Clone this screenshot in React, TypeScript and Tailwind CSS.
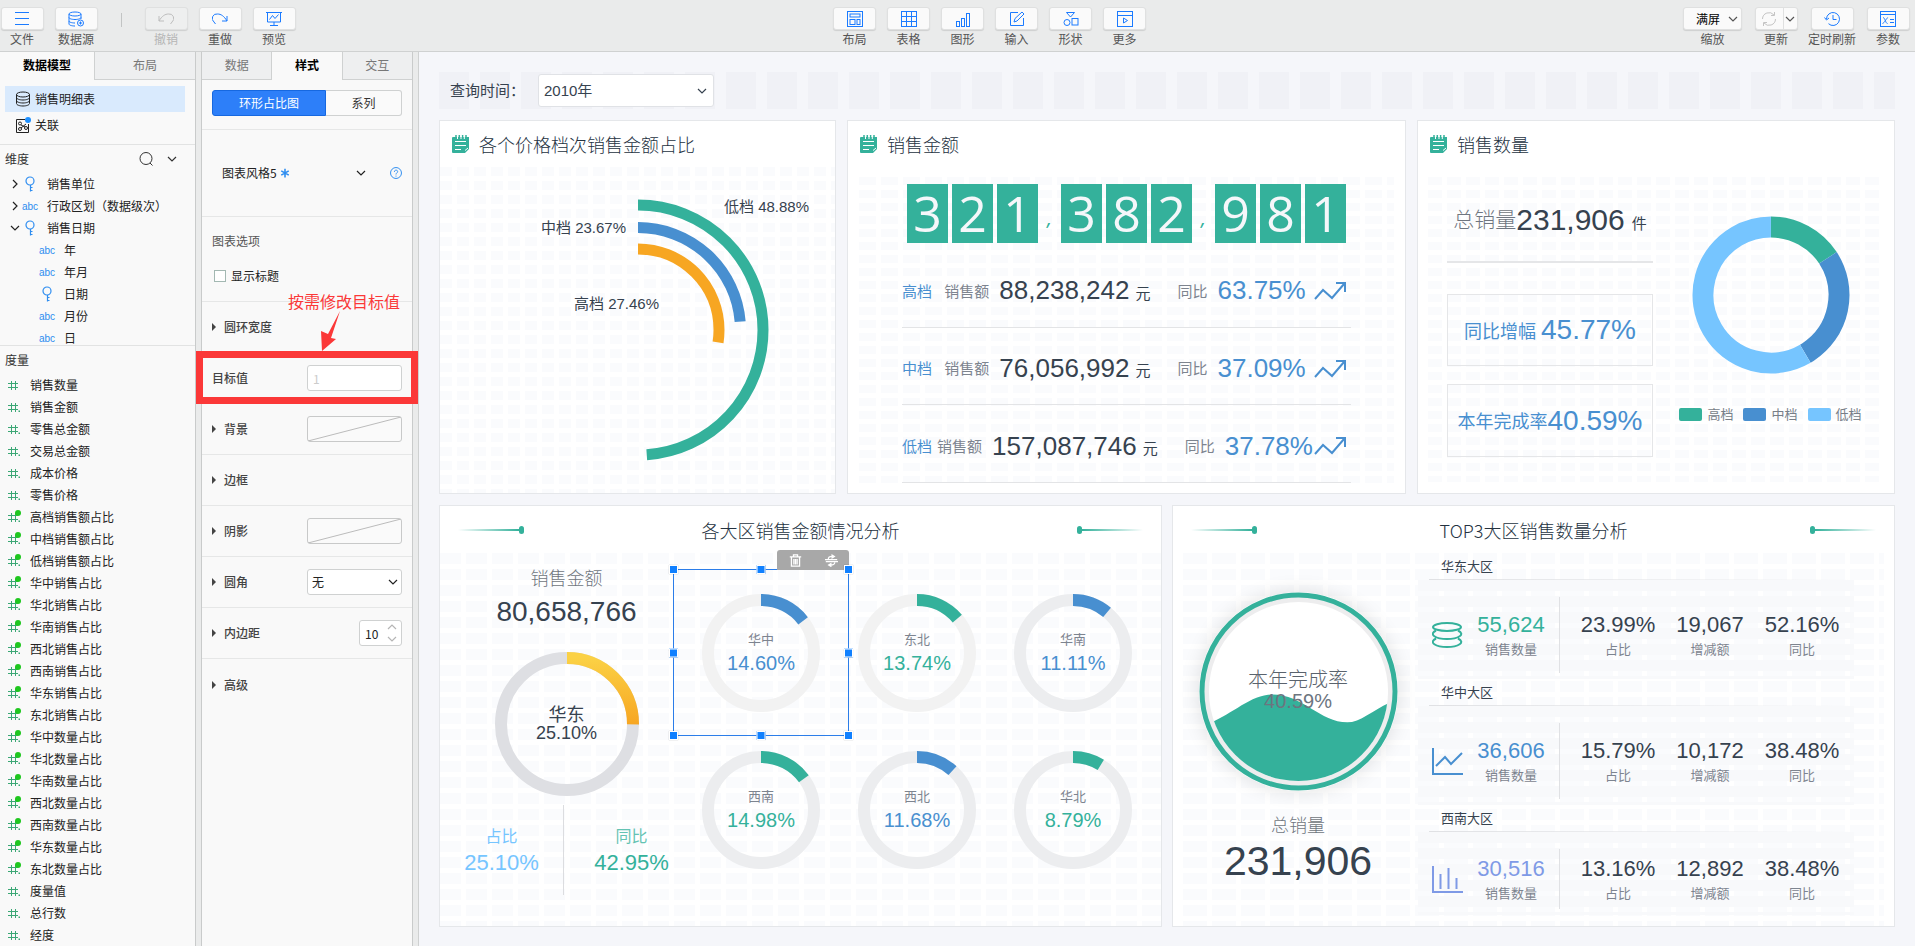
import { ReactNode, useState } from "react";

type IconProps = { children: ReactNode; className?: string; size?: number };

const Icon = ({ children, className = "", size = 16 }: IconProps) => (
  <svg
    width={size}
    height={size}
    viewBox="0 0 16 16"
    fill="none"
    stroke="currentColor"
    strokeWidth="1"
    className={`shrink-0 ${className}`}
    aria-hidden="true"
  >
    {children}
  </svg>
);

const Chevron = ({ className = "" }: { className?: string }) => (
  <svg width="10" height="6" viewBox="0 0 10 6" fill="none" stroke="currentColor" strokeWidth="1.2" className={`shrink-0 ${className}`} aria-hidden="true">
    <path d="M1 1l4 4 4-4" />
  </svg>
);

/* ---------- toolbar ---------- */

const toolIcons = {
  file: <path d="M1 1.500h14M1 7.500h14M1 13.500h14" />,
  source: (
    <>
      <ellipse cx="7" cy="3" rx="6" ry="2" />
      <path d="M1 3v10c0 1.100 2.700 2 6 2M13 3v5M1 6.500c0 1.100 2.700 2 6 2s6-.9 6-2M1 10c0 1.100 2.700 2 6 2" />
      <circle cx="12.500" cy="12" r="3" />
      <path d="M12.500 10.500v3M11 12h3" />
    </>
  ),
  undo: <path d="M1 5v5h5M1 10C4 5 7 3 10.500 3a4.500 4.500 0 0 1 3.500 8l-1.500 2" />,
  redo: <path d="M15 5v5h-5M15 10C12 5 9 3 5.500 3A4.500 4.500 0 0 0 2 11l1.500 2" />,
  preview: (
    <>
      <path d="M0 1.500h16M1.500 1.500v9.500h13V1.500M8 11v3M4 14.500h8" />
      <path d="M3.500 8.500l3-4 2.500 3 3.500-4" />
    </>
  ),
  layout: (
    <>
      <rect x="0.500" y="0.500" width="15" height="15" />
      <rect x="3" y="3" width="10" height="3" />
      <rect x="3" y="8.500" width="5" height="5" />
      <rect x="10" y="8.500" width="3" height="5" />
    </>
  ),
  table: (
    <>
      <rect x="0.500" y="0.500" width="15" height="15" />
      <path d="M0 5.500h16M0 10.500h16M5.500 0v16M10.500 0v16" />
    </>
  ),
  chart: (
    <>
      <rect x="1.500" y="10.500" width="3" height="5" />
      <rect x="6.500" y="7.500" width="3" height="8" />
      <rect x="11.500" y="2.500" width="3" height="13" />
    </>
  ),
  input: (
    <>
      <path d="M9 1.500H1.500v13h13V7" />
      <path d="M5 11l1-3.500L13 1l2 2-7 7z" />
    </>
  ),
  shape: (
    <>
      <path d="M3.500 1.500h8L7.500 6z" />
      <circle cx="4" cy="11.500" r="3" />
      <rect x="9" y="7.500" width="6" height="6.500" />
    </>
  ),
  more: (
    <>
      <rect x="0.500" y="0.500" width="15" height="15" />
      <path d="M0 4.500h16M6.500 7v5l4-2.500z" />
    </>
  ),
  refresh: (
    <>
      <path d="M1.500 8A6.500 6.500 0 0 1 13 4M14.500 8A6.500 6.500 0 0 1 3 12" />
      <path d="M13.500 1v3.500H10M2.500 15v-3.500H6" />
    </>
  ),
  timer: (
    <>
      <path d="M2.500 8a6.500 6.500 0 1 1 2 4.700" />
      <path d="M.5 6.500l2 2.500 2.500-2M9 4v4.500h3.500" />
    </>
  ),
  params: (
    <>
      <rect x="0.500" y="0.500" width="15" height="15" />
      <path d="M0 3.500h16M3 6.500c2 0 2.500 6 4.500 6M8 6.500c-1 0-4 6-5.500 6M10 8.500h4M10 11.500h4" />
    </>
  ),
};

const buttonBox =
  "flex h-[23px] w-[43px] items-center justify-center rounded-[3px] border border-[#dfe0e0] bg-[#fafafa] shadow-[0_1px_1px_rgba(0,0,0,0.12)]";

const Tool = ({ icon, label, disabled = false }: { icon: keyof typeof toolIcons; label: string; disabled?: boolean }) => (
  <button type="button" disabled={disabled} className="group flex w-11 flex-col items-center gap-px whitespace-nowrap text-[#555] disabled:text-[#b5b5b5]">
    <span className={`${buttonBox} text-[#1b7bff] group-disabled:bg-[#eeefef] group-disabled:text-[#bdbdbd]`}>
      <Icon>{toolIcons[icon]}</Icon>
    </span>
    <span className="leading-4">{label}</span>
  </button>
);

const Toolbar = () => (
  <header className="flex h-[52px] shrink-0 border-b border-[#cfd1d1] pt-[7px]">
    <div className="flex flex-1 gap-[10px]">
      <Tool icon="file" label="文件" />
      <Tool icon="source" label="数据源" />
      <div className="flex w-[26px] justify-end pt-[6px]">
        <span className="mr-3 h-[14px] w-px bg-[#c2c4c4]" />
      </div>
      <Tool icon="undo" label="撤销" disabled />
      <Tool icon="redo" label="重做" />
      <Tool icon="preview" label="预览" />
    </div>
    <div className="ml-[69px] flex gap-[10px]">
      <Tool icon="layout" label="布局" />
      <Tool icon="table" label="表格" />
      <Tool icon="chart" label="图形" />
      <Tool icon="input" label="输入" />
      <Tool icon="shape" label="形状" />
      <Tool icon="more" label="更多" />
    </div>
    <div className="flex flex-1 justify-end gap-3 pr-[5px] text-[#555]">
      <div className="flex flex-col items-center gap-px">
        <span className="relative flex items-center">
          <select id="zoom" className="h-[23px] w-[59px] appearance-none rounded-[3px] border border-[#dfe0e0] bg-[#fafafa] pl-3 text-black shadow-[0_1px_1px_rgba(0,0,0,0.12)]">
            <option>满屏</option>
          </select>
          <Chevron className="pointer-events-none absolute right-1" />
        </span>
        <label htmlFor="zoom" className="leading-4">缩放</label>
      </div>
      <div className="flex w-11 flex-col items-center gap-px">
        <span className={buttonBox}>
          <button type="button" disabled aria-label="更新" className="flex flex-1 justify-center text-[#c4c4c4]">
            <Icon>{toolIcons.refresh}</Icon>
          </button>
          <button type="button" aria-label="更新选项" className="flex h-full w-[14px] items-center justify-center border-l border-[#dfe0e0]">
            <Chevron />
          </button>
        </span>
        <span className="leading-4">更新</span>
      </div>
      <Tool icon="timer" label="定时刷新" />
      <Tool icon="params" label="参数" />
    </div>
  </header>
);

/* ---------- data model panel ---------- */

type Dimension = { name: string; type: "key" | "abc"; level: 1 | 2; open?: boolean };

const dimensions: Dimension[] = [
  { name: "销售单位", type: "key", level: 1 },
  { name: "行政区划（数据级次）", type: "abc", level: 1 },
  { name: "销售日期", type: "key", level: 1, open: true },
  { name: "年", type: "abc", level: 2 },
  { name: "年月", type: "abc", level: 2 },
  { name: "日期", type: "key", level: 2 },
  { name: "月份", type: "abc", level: 2 },
  { name: "日", type: "abc", level: 2 },
];

const measures = [
  { name: "销售数量", kind: "int" },
  { name: "销售金额", kind: "decimal" },
  { name: "零售总金额", kind: "decimal" },
  { name: "交易总金额", kind: "decimal" },
  { name: "成本价格", kind: "decimal" },
  { name: "零售价格", kind: "decimal" },
  { name: "高档销售额占比", kind: "calc" },
  { name: "中档销售额占比", kind: "calc" },
  { name: "低档销售额占比", kind: "calc" },
  { name: "华中销售占比", kind: "calc" },
  { name: "华北销售占比", kind: "calc" },
  { name: "华南销售占比", kind: "calc" },
  { name: "西北销售占比", kind: "calc" },
  { name: "西南销售占比", kind: "calc" },
  { name: "华东销售占比", kind: "calc" },
  { name: "东北销售占比", kind: "calc" },
  { name: "华中数量占比", kind: "calc" },
  { name: "华北数量占比", kind: "calc" },
  { name: "华南数量占比", kind: "calc" },
  { name: "西北数量占比", kind: "calc" },
  { name: "西南数量占比", kind: "calc" },
  { name: "华东数量占比", kind: "calc" },
  { name: "东北数量占比", kind: "calc" },
  { name: "度量值", kind: "decimal" },
  { name: "总行数", kind: "decimal" },
  { name: "经度", kind: "decimal" },
];

const FieldIcon = ({ type }: { type: "key" | "abc" }) => (
  <span className="flex w-5 justify-center text-[#2e8df0]">
    {type === "abc" ? (
      <span className="font-['Liberation_Sans',sans-serif] text-[10px]">abc</span>
    ) : (
      <Icon>
        <circle cx="8" cy="5" r="4" strokeWidth="1.200" />
        <path d="M8.500 9v6.500M8.500 11.500h2M8.500 14.500h2" strokeWidth="1.200" />
      </Icon>
    )}
  </span>
);

const MeasureIcon = ({ kind }: { kind: string }) => (
  <svg width="16" height="16" viewBox="0 0 16 16" className="shrink-0" aria-hidden="true">
    <path d="M3.500 4v9M7.500 4v9M0 6.500h10M0 10.500h10" stroke="#3ba775" fill="none" />
    {kind !== "int" && <rect x="10.500" y="11.500" width="1.500" height="1.500" fill="#3ba775" />}
    {kind === "calc" && <circle cx="10" cy="4" r="3" fill="#1fc71f" />}
  </svg>
);

const Tab = ({ label, active = false }: { label: string; active?: boolean }) => (
  <button
    type="button"
    className={
      active
        ? "flex-1 bg-[#f9f9f9] pb-[2px] font-bold text-black"
        : "flex-1 border-b border-[#cfd1d1] bg-[#eeeff0] pb-px text-[#777]"
    }
  >
    {label}
  </button>
);

const ModelPanel = () => (
  <aside className="flex w-[196px] shrink-0 flex-col border-r border-[#c9cbcb] bg-[#f9f9f9]">
    <div className="grid h-[28px] shrink-0 grid-cols-[95fr_100fr] divide-x divide-[#cfd1d1]">
      <Tab label="数据模型" active />
      <Tab label="布局" />
    </div>
    <div className="flex shrink-0 flex-col border-b border-[#e2e3e3] px-[5px] py-[6px]">
      <button type="button" className="mr-[5px] flex h-[26px] items-center gap-1 bg-[#d9eafd] pl-[10px]">
        <Icon className="text-[#222]">
          <ellipse cx="8" cy="3.500" rx="6.500" ry="2.500" />
          <path d="M1.500 3.500v9c0 1.400 2.900 2.500 6.500 2.500s6.500-1.100 6.500-2.500v-9M1.500 6.500C1.500 7.900 4.400 9 8 9s6.500-1.100 6.500-2.500M1.500 9.500C1.500 10.900 4.400 12 8 12s6.500-1.100 6.500-2.500" />
        </Icon>
        销售明细表
      </button>
      <button type="button" className="mr-[5px] flex h-[26px] items-center gap-1 pl-[10px]">
        <Icon className="text-[#222]">
          <path d="M10 2.500H1.500v13h12V7" />
          <circle cx="5" cy="6.500" r="1.500" />
          <circle cx="5" cy="12" r="1.500" />
          <circle cx="11" cy="11" r="1.500" />
          <path d="M6 8l4 2M6 11l5-4" />
          <circle cx="13" cy="3" r="3" fill="#1e90ff" stroke="none" />
        </Icon>
        关联
      </button>
    </div>
    <section className="h-[201px] shrink-0 overflow-hidden border-b border-[#e2e3e3]">
      <div className="flex h-7 items-center pl-[5px] pr-[18px] text-[#333]">
        <h2 className="flex-1">维度</h2>
        <button type="button" aria-label="搜索" className="mr-[13px]">
          <Icon>
            <circle cx="8" cy="7.500" r="6" />
            <path d="M12 12l2.500 2.500" />
          </Icon>
        </button>
        <button type="button" aria-label="展开">
          <Chevron />
        </button>
      </div>
      <ul>
        {dimensions.map((d) => (
          <li key={d.name + d.level} className={`flex h-[22px] items-center ${d.level === 2 ? "pl-[37px]" : "pl-[9px]"}`}>
            {d.level === 1 && (
              <span className="flex w-[11px] justify-center">
                <Chevron className={d.open ? "" : "-rotate-90"} />
              </span>
            )}
            <FieldIcon type={d.type} />
            <span className="pl-[7px]">{d.name}</span>
          </li>
        ))}
      </ul>
    </section>
    <section className="overflow-hidden">
      <h2 className="flex h-7 items-center pl-[5px] text-[#333]">度量</h2>
      <ul>
        {measures.map((m) => (
          <li key={m.name} className="flex h-[22px] items-center gap-[6px] pl-2">
            <MeasureIcon kind={m.kind} />
            {m.name}
          </li>
        ))}
      </ul>
    </section>
  </aside>
);

/* ---------- style panel ---------- */

const Row = ({ label, plain = false, children }: { label: string; plain?: boolean; children?: ReactNode }) => (
  <div className="relative flex h-[51px] items-center border-b border-[#e6e7e7] px-[10px] last:border-b-0">
    {!plain && (
      <svg width="4" height="8" viewBox="0 0 4 8" className="mr-2" aria-hidden="true">
        <path d="M0 0l4 4-4 4z" fill="#444" />
      </svg>
    )}
    <span className="flex-1 font-medium text-[#444]">{label}</span>
    {children}
  </div>
);

const EmptySwatch = ({ label }: { label: string }) => (
  <button type="button" aria-label={label} className="h-[26px] w-[95px] rounded-[3px] border border-[#c8c9c9] bg-[#fafafa]">
    <svg width="93" height="24" viewBox="0 0 93 24" aria-hidden="true">
      <path d="M0 24L93 0" stroke="#bbb" />
    </svg>
  </button>
);

const StylePanel = () => {
  const [target, setTarget] = useState("");
  const [padding, setPadding] = useState("10");

  return (
    <aside className="ml-[5px] flex w-[212px] shrink-0 flex-col border-x border-[#c9cbcb] bg-[#f9f9f9]">
      <div className="flex h-[28px] shrink-0 divide-x divide-[#cfd1d1]">
        <Tab label="数据" />
        <Tab label="样式" active />
        <Tab label="交互" />
      </div>
      <div className="flex h-[50px] shrink-0 border-b border-[#e6e7e7] px-[10px] pt-[10px]">
        <button type="button" className="h-[26px] w-[114px] rounded-l-[3px] border border-[#1668e0] bg-[#2d7ff9] text-white">环形占比图</button>
        <button type="button" className="h-[26px] flex-1 rounded-r-[3px] border border-l-0 border-[#cfd1d1] bg-[#fafafa] text-[#333]">系列</button>
      </div>
      <div className="flex h-[87px] shrink-0 items-center border-b border-[#e6e7e7] pl-5 pr-[10px]">
        <span>图表风格5</span>
        <span className="flex-1 pl-[3px] text-[#2e8df0]">
          <Icon size={10}>
            <path d="M8 1v14M2 4.500l12 7M2 11.500l12-7" strokeWidth="2.500" />
          </Icon>
        </span>
        <Chevron />
        <button type="button" aria-label="帮助" className="ml-6 text-[#2e8df0]">
          <Icon size={12}>
            <circle cx="8" cy="8" r="7.300" strokeWidth="1.300" />
            <path d="M5.800 6.500c0-3 4.400-3 4.400-.4C10.200 7.800 8 8 8 10M8 11.500v1.300" strokeWidth="1.300" />
          </Icon>
        </button>
      </div>
      <div className="flex h-[85px] shrink-0 flex-col gap-[17px] border-b border-[#e6e7e7] px-[10px] pt-[15px]">
        <span className="leading-[18px] text-[#555]">图表选项</span>
        <label className="flex items-center gap-[5px] pl-[2px] leading-[18px]">
          <input type="checkbox" className="size-3 appearance-none border border-[#a3b8b2] bg-white" />
          显示标题
        </label>
      </div>
      <div>
        <Row label="圆环宽度" />
        <Row label="目标值" plain>
          <input
            aria-label="目标值"
            placeholder="1"
            value={target}
            onChange={(e) => setTarget(e.target.value)}
            className="h-[26px] w-[95px] rounded-[3px] border border-[#cfd1d1] bg-white px-[5px] placeholder:text-[#ccc]"
          />
          {/* Callout round the target value */}
          <div className="pointer-events-none absolute -inset-x-[6px] -bottom-px -top-[2px] z-10 border-[7px] border-[#fb3838]">
            <div className="absolute bottom-full left-[85px] pb-[7px] text-[#fb3838]">
              <span className="block whitespace-nowrap text-[16px] leading-5">按需修改目标值</span>
              <svg width="20" height="40" viewBox="0 0 20 40" className="ml-[33px]" aria-hidden="true">
                <path d="M19 0L7 23 0 20l1 20 14-12-5-1z" fill="#fb3838" />
              </svg>
            </div>
          </div>
        </Row>
        <Row label="背景">
          <EmptySwatch label="背景" />
        </Row>
        <Row label="边框" />
        <Row label="阴影">
          <EmptySwatch label="阴影" />
        </Row>
        <Row label="圆角">
          <select aria-label="圆角" className="h-[26px] w-[95px] appearance-none rounded-[3px] border border-[#cfd1d1] bg-white pl-1 text-[#222]">
            <option>无</option>
          </select>
          <Chevron className="pointer-events-none absolute right-[14px]" />
        </Row>
        <Row label="内边距">
          <input
            aria-label="内边距"
            inputMode="numeric"
            value={padding}
            onChange={(e) => setPadding(e.target.value)}
            className="h-[26px] w-[43px] rounded-[3px] border border-[#cfd1d1] bg-white pl-[5px] text-[#222]"
          />
          <span className="pointer-events-none absolute right-[15px] flex flex-col gap-[6px] text-[#b5b5b5]">
            <Chevron className="rotate-180" />
            <Chevron />
          </span>
        </Row>
        <Row label="高级" />
      </div>
    </aside>
  );
};

/* ---------- dashboard ---------- */

const card = "flex flex-col border border-[#e5e7ea] bg-white";
const num = "font-['Liberation_Sans',sans-serif]";

const CardTitle = ({ children }: { children: ReactNode }) => (
  <div className="flex h-[46px] shrink-0 items-center gap-[9px] pl-3">
    <svg width="18" height="18" viewBox="0 0 18 18" aria-hidden="true">
      <path d="M1 2h16v12l-4 4H1a1 1 0 0 1-1-1V3a1 1 0 0 1 1-1z" fill="#34b19b" />
      <path d="M3 6.500h11M3 10.500h11M3 14.500h6M13 15.500l3-2.500" stroke="#fff" strokeWidth="1" />
      <path d="M4 0v3M7.300 0v3M10.600 0v3M14 0v3" stroke="#34b19b" strokeWidth="1.500" />
      <path d="M5.500 1v3M9 1v3M12.300 1v3" stroke="#fff" strokeWidth="1" />
    </svg>
    <h3 className="text-[18px] font-light leading-6 text-[#24323f]">{children}</h3>
  </div>
);

const Comet = ({ flip = false }: { flip?: boolean }) => (
  <span className={`flex w-[66px] items-center ${flip ? "flex-row-reverse" : ""}`}>
    <span className={`h-[2px] flex-1 from-transparent to-[#34b19b] ${flip ? "bg-linear-to-l" : "bg-linear-to-r"}`} />
    <span className="h-2 w-[5px] rounded-full bg-[#34b19b]" />
  </span>
);

const CenterTitle = ({ children }: { children: ReactNode }) => (
  <div className="flex h-[47px] shrink-0 items-center justify-between px-[18px]">
    <Comet />
    <h3 className="text-[18px] font-light leading-6 text-[#24323f]">{children}</h3>
    <Comet flip />
  </div>
);

type ArcProps = { r: number; width: number; from?: number; value: number; color: string };

const Arc = ({ r, width, from = 0, value, color }: ArcProps) => (
  <circle
    r={r}
    fill="none"
    stroke={color}
    strokeWidth={width}
    pathLength={100}
    strokeDasharray={`${value} 100`}
    transform={`rotate(${-90 + from * 3.6})`}
  />
);

const PriceShareCard = () => (
  <section className={card}>
    <CardTitle>各个价格档次销售金额占比</CardTitle>
    <div className="flex flex-1 justify-center bg-[repeating-linear-gradient(to_bottom,transparent_0_9px,#fff_9px_14px),repeating-linear-gradient(to_right,#fafbfd_0_12px,#fff_12px_17px)]">
      <svg width="394" height="326" viewBox="-197 -163 394 326" fontSize="15" fill="#36424f">
        <Arc r={125} width={11} value={48.88} color="#34b19b" />
        <Arc r={102.5} width={11} value={23.67} color="#488fd0" />
        <Arc r={81} width={11} value={27.46} color="#f7a622" />
        <g className="font-['Liberation_Sans','Noto_Sans_CJK_SC',sans-serif]">
          <text x="86" y="-118">低档 48.88%</text>
          <text x="-97" y="-97">中档 23.67%</text>
          <text x="-64" y="-21">高档 27.46%</text>
        </g>
      </svg>
    </div>
  </section>
);

const priceRows = [
  { tier: "高档", amount: "88,238,242", yoy: "63.75%" },
  { tier: "中档", amount: "76,056,992", yoy: "37.09%" },
  { tier: "低档", amount: "157,087,746", yoy: "37.78%" },
];

const AmountCard = () => (
  <section className={card}>
    <CardTitle>销售金额</CardTitle>
    <div className="mx-[11px] mb-[10px] mt-[10px] flex flex-1 flex-col bg-[repeating-linear-gradient(to_bottom,transparent_0_8px,#fff_8px_13px),repeating-linear-gradient(to_right,#fafbfd_0_17px,#fff_17px_22px)] px-[43px]">
      <div className="flex justify-center gap-1 pt-[7px]">
        {"321,382,981".split("").map((ch, i) =>
          ch === "," ? (
            <span key={i} className="flex w-[15px] items-center justify-center pt-2 font-['Open_Sans',sans-serif] text-[20px] italic text-[#34b19b]">
              ,
            </span>
          ) : (
            <span key={i} className="flex h-[59px] w-[41px] items-center justify-center bg-[#34b19b] font-['Open_Sans',sans-serif] text-[50px] leading-[59px] text-[#f5f7fa]">
              {ch}
            </span>
          )
        )}
      </div>
      <div className="mt-[7px] flex flex-1 flex-col">
        {priceRows.map((row) => (
          <div key={row.tier} className="flex flex-1 items-center whitespace-nowrap border-b border-[#e3e4e6] pr-[5px] pt-[5px] text-[15px]">
            <span className="text-[#488fd0]">{row.tier}</span>
            <span className="flex flex-1 items-center justify-center pl-1 text-[#7d848f]">
              销售额
              <span className={`${num} pl-[10px] pr-[6px] text-[26px] text-[#36424f]`}>{row.amount}</span>
              <span className="pt-1 text-[#36424f]">元</span>
              <span className="pl-[27px]">同比</span>
              <span className={`${num} pl-[10px] text-[26px] text-[#488fd0]`}>{row.yoy}</span>
            </span>
            <svg width="32" height="20" viewBox="0 0 32 20" fill="none" stroke="#488fd0" strokeWidth="2" aria-hidden="true">
              <path d="M1 18l8-9 9 8L30 3M22 2h9v9" />
            </svg>
          </div>
        ))}
      </div>
    </div>
  </section>
);

const tiers = [
  { name: "高档", color: "#34b19b", from: 0, value: 15.8 },
  { name: "中档", color: "#488fd0", from: 15.8, value: 25.8 },
  { name: "低档", color: "#76c5ff", from: 41.6, value: 58.4 },
];

const QuantityCard = () => (
  <section className={card}>
    <CardTitle>销售数量</CardTitle>
    <div className="mx-[10px] mb-[11px] mt-[10px] flex flex-1 bg-[repeating-linear-gradient(to_bottom,transparent_0_8px,#fff_8px_13px),repeating-linear-gradient(to_right,#fafbfd_0_14px,#fff_14px_19px)] pl-[19px]">
      <div className="flex w-[206px] shrink-0 flex-col whitespace-nowrap">
        <div className="flex h-[86px] items-center justify-center border-b-2 border-[#e5e6e8]">
          <span className="text-[21px] font-light text-[#6f7680]">总销量</span>
          <span className={`${num} text-[30px] text-[#36424f]`}>231,906</span>
          <span className="pl-[7px] pt-2 text-[15px] text-[#36424f]">件</span>
        </div>
        <div className="mt-[31px] flex h-[72px] items-center justify-center gap-[5px] border border-[#e5e6e8] text-[#488fd0]">
          <span className="text-[18px]">同比增幅</span>
          <span className={`${num} text-[28px]`}>45.77%</span>
        </div>
        <div className="mt-[18px] flex h-[73px] items-center justify-center border border-[#e5e6e8] text-[#488fd0]">
          <span className="text-[18px]">本年完成率</span>
          <span className={`${num} text-[28px]`}>40.59%</span>
        </div>
      </div>
      <div className="flex flex-1 flex-col items-center pl-1 pt-[38px]">
        <svg width="160" height="160" viewBox="-80 -80 160 160">
          {tiers.map((t) => (
            <Arc key={t.name} r={68} width={21} from={t.from} value={t.value} color={t.color} />
          ))}
        </svg>
        <div className="mt-[29px] flex gap-[10px]">
          {tiers.map((t) => (
            <span key={t.name} className="flex items-center gap-[5px] text-[13px] leading-5 text-[#777e88]">
              <span className="h-[13px] w-[23px] rounded-[2px]" style={{ backgroundColor: t.color }} />
              {t.name}
            </span>
          ))}
        </div>
      </div>
    </div>
  </section>
);

const regions = [
  { name: "华中", value: 14.6, label: "14.60%", color: "#488fd0", track: "#f2f2f2" },
  { name: "东北", value: 13.74, label: "13.74%", color: "#34b19b", track: "#f2f2f2" },
  { name: "华南", value: 11.11, label: "11.11%", color: "#488fd0", track: "#ecedef" },
  { name: "西南", value: 14.98, label: "14.98%", color: "#34b19b", track: "#ecedef" },
  { name: "西北", value: 11.68, label: "11.68%", color: "#488fd0", track: "#ecedef" },
  { name: "华北", value: 8.79, label: "8.79%", color: "#34b19b", track: "#ecedef" },
];

const handles = [
  "-left-[5px] -top-[5px]",
  "left-1/2 -translate-x-1/2 -top-[5px]",
  "-right-[5px] -top-[5px]",
  "-left-[5px] top-1/2 -translate-y-1/2",
  "-right-[5px] top-1/2 -translate-y-1/2",
  "-left-[5px] -bottom-[5px]",
  "left-1/2 -translate-x-1/2 -bottom-[5px]",
  "-right-[5px] -bottom-[5px]",
];

const Selection = () => (
  <div className="absolute -inset-x-[10px] -inset-y-[5px] border border-[#2b7de9]">
    <div className="absolute bottom-full -right-px flex h-5 w-[72px] items-center justify-around rounded-t-[3px] bg-[#a8a8a8] text-white">
      <button type="button" aria-label="删除">
        <Icon size={13}>
          <path d="M1 3.500h14M5.500 3V1h5v2M3 4v11h10V4M6 6v7M8 6v7M10 6v7" strokeWidth="1.600" />
        </Icon>
      </button>
      <button type="button" aria-label="替换">
        <Icon size={13}>
          <path d="M0 7h15M1 9.500h15" strokeWidth="1.500" />
          <path d="M4 6.500C4 4 6 3 9 3M12 10c0 2.500-2 3.500-5 3.500" strokeWidth="1.500" />
          <path d="M8 0l5 3-5 3zM8 10.500l-5 3 5 3z" fill="currentColor" stroke="none" />
        </Icon>
      </button>
    </div>
    {handles.map((pos) => (
      <span key={pos} className={`absolute size-[9px] border border-white bg-[#1080ff] shadow-[0_0_1px_rgba(0,0,0,0.3)] ${pos}`} />
    ))}
  </div>
);

const RegionAmountCard = () => (
  <section className={card}>
    <CenterTitle>各大区销售金额情况分析</CenterTitle>
    <div className="flex flex-1 justify-between bg-[repeating-linear-gradient(to_bottom,transparent_0_11px,#fff_11px_16px),repeating-linear-gradient(to_right,#fafbfd_0_21px,#fff_21px_26px)] pr-[10px]">
      <div className="ml-[11px] flex w-[231px] shrink-0 flex-col items-center pt-[11px]">
        <span className="text-[18px] font-light leading-[26px] text-[#6f7680]">销售金额</span>
        <span className={`${num} mt-1 text-[28px] leading-9 text-[#36424f]`}>80,658,766</span>
        <div className="mt-[22px] grid place-items-center">
          <svg width="144" height="144" viewBox="-72 -72 144 144" className="col-start-1 row-start-1">
            <defs>
              <linearGradient id="amber" x1="0.5" y1="0" x2="1" y2="0">
                <stop offset="0" stopColor="#f7a622" />
                <stop offset="1" stopColor="#fbd145" />
              </linearGradient>
            </defs>
            <circle r="66" fill="none" stroke="#dedfe3" strokeWidth="12" />
            <Arc r={66} width={12} value={25.1} color="url(#amber)" />
          </svg>
          <div className="col-start-1 row-start-1 flex flex-col items-center pb-[2px] text-[18px] leading-5 text-[#36424f]">
            <span>华东</span>
            <span className={num}>25.10%</span>
          </div>
        </div>
        <div className="mt-[9px] flex h-[90px] pl-[6px] text-center">
          <div className="flex w-[124px] flex-col justify-center border-r border-[#dcdde0] text-[#76c5ff]">
            <span className="text-[16px] leading-[26px]">占比</span>
            <span className={`${num} text-[22px] leading-[30px]`}>25.10%</span>
          </div>
          <div className="flex w-[135px] flex-col justify-center text-[#34b19b]">
            <span className="text-[16px] leading-[26px] text-[#64c3b3]">同比</span>
            <span className={`${num} text-[22px] leading-[30px]`}>42.95%</span>
          </div>
        </div>
      </div>
      <div className="grid grid-cols-[repeat(3,156px)] content-start pt-[21px]">
        {regions.map((r, i) => (
          <div key={r.name} className="relative grid h-[157px] place-items-center">
            <svg width="118" height="118" viewBox="-59 -59 118 118" className="col-start-1 row-start-1">
              <circle r="53" fill="none" stroke={r.track} strokeWidth="12" />
              <Arc r={53} width={12} value={r.value} color={r.color} />
            </svg>
            <div className="col-start-1 row-start-1 flex flex-col items-center pb-[3px]" style={{ color: r.color }}>
              <span className="text-[13px] leading-6 text-[#7d848f]">{r.name}</span>
              <span className={`${num} text-[20px] leading-6`}>{r.label}</span>
            </div>
            {i === 0 && <Selection />}
          </div>
        ))}
      </div>
    </div>
  </section>
);

const topRegions = [
  {
    name: "华东大区",
    qty: "55,624",
    stats: [["23.99%", "占比"], ["19,067", "增减额"], ["52.16%", "同比"]],
    color: "text-[#34b19b]",
    icon: (
      <>
        <ellipse cx="15" cy="6" rx="14" ry="4" />
        <path d="M4 9.500c-8 4 0 8.500 11 8.500s19-4.500 11-8.500M4 17.500c-8 4 0 8.500 11 8.500s19-4.500 11-8.500" />
      </>
    ),
  },
  {
    name: "华中大区",
    qty: "36,606",
    stats: [["15.79%", "占比"], ["10,172", "增减额"], ["38.48%", "同比"]],
    color: "text-[#488fd0]",
    icon: <path d="M1 1v26h30M4 19l9-9 6 7L30 6" />,
  },
  {
    name: "西南大区",
    qty: "30,516",
    stats: [["13.16%", "占比"], ["12,892", "增减额"], ["38.48%", "同比"]],
    color: "text-[#7f9ae6]",
    icon: <path d="M1 1v26h30M8.500 9v15M16.500 3v21M24.500 13v11" />,
  },
];

const TopRegionsCard = () => (
  <section className={card}>
    <CenterTitle>TOP3大区销售数量分析</CenterTitle>
    <div className="mx-[10px] flex flex-1 bg-[repeating-linear-gradient(to_bottom,transparent_0_11px,#fff_11px_16px),repeating-linear-gradient(to_right,#fafbfd_0_24px,#fff_24px_29px)]">
      <div className="flex w-[230px] shrink-0 flex-col items-center pt-[39px]">
        <div className="grid place-items-center rounded-full shadow-[0_0_20px_rgba(0,0,0,0.12)]">
          <svg width="199" height="199" viewBox="-100 -100 200 200" className="col-start-1 row-start-1">
            <circle r="97" fill="#ededee" stroke="#34b19b" strokeWidth="5" />
            <clipPath id="bowl">
              <circle r="90" />
            </clipPath>
            <circle r="90" fill="#fff" />
            <path
              d="M-90 32C-65 22-48 3-26 3C4 3 22 31 49 31C62 31 76 18 92 11V100H-90z"
              fill="#34b19b"
              clipPath="url(#bowl)"
            />
          </svg>
          <div className="col-start-1 row-start-1 flex flex-col items-center pb-1 text-[20px] leading-[22px] text-[#6c757f]">
            <span className="font-light text-[#5a636d]">本年完成率</span>
            <span className={num}>40.59%</span>
          </div>
        </div>
        <span className="mt-5 text-[18px] font-light leading-[26px] text-[#6f7680]">总销量</span>
        <span className={`${num} mt-px text-[41px] leading-[46px] text-[#36424f]`}>231,906</span>
      </div>
      <div className="ml-[5px] w-[436px]">
        {topRegions.map((r, i) => (
          <div key={r.name}>
            <h4 className="ml-[11px] flex h-[26px] items-center pl-3 text-[13px] text-[#36424f]">{r.name}</h4>
            <div className="ml-[11px] h-px bg-linear-to-r from-[#e0e1e4] to-transparent" />
            <div className="bg-[repeating-linear-gradient(to_bottom,#f8f9fb_0_11px,transparent_11px_16px)] pb-[6px] pt-[17px]">
              <div className={`flex ${i === 2 ? "h-[60px]" : "h-[76px]"}`}>
                <div className="flex w-[142px] items-center border-r border-[#e0e1e4] pl-[14px]">
                  <svg width="31" height="28" viewBox="0 0 31 28" fill="none" stroke="currentColor" strokeWidth="2" className={r.color} aria-hidden="true">
                    {r.icon}
                  </svg>
                  <div className="flex flex-1 flex-col items-center">
                    <span className={`${num} text-[22px] leading-7 ${r.color}`}>{r.qty}</span>
                    <span className="text-[13px] leading-5 text-[#7d848f]">销售数量</span>
                  </div>
                </div>
                <dl className="ml-3 grid flex-1 grid-cols-[repeat(3,92px)] items-center">
                  {r.stats.map(([value, label]) => (
                    <div key={label} className="flex flex-col-reverse items-center">
                      <dt className="text-[13px] leading-5 text-[#7d848f]">{label}</dt>
                      <dd className={`${num} text-[22px] leading-7 text-[#36424f]`}>{value}</dd>
                    </div>
                  ))}
                </dl>
              </div>
            </div>
          </div>
        ))}
      </div>
    </div>
  </section>
);

const Dashboard = () => (
  <main className="ml-[5px] flex min-w-0 flex-1 flex-col gap-[11px] border-l border-[#cfd1d1] bg-[#f5f6fa] px-5 pb-[19px] pt-5">
    <div className="flex h-[37px] shrink-0 items-center bg-[repeating-linear-gradient(to_right,#f0f1f6_0_30px,#f5f6fa_30px_41px)] pl-[11px] text-[15px] text-[#36424f]">
      <label htmlFor="year" className="w-[88px]">查询时间：</label>
      <span className="relative flex items-center">
        <select
          id="year"
          className="h-[33px] w-44 appearance-none rounded-[3px] border border-[#e0e2e6] bg-white pl-[5px] pt-[2px] font-['Liberation_Sans','Noto_Sans_CJK_SC',sans-serif]"
        >
          <option>2010年</option>
        </select>
        <Chevron className="pointer-events-none absolute right-[7px]" />
      </span>
    </div>
    <div className="grid flex-[374] grid-cols-[397fr_559fr_478fr] gap-[11px]">
      <PriceShareCard />
      <AmountCard />
      <QuantityCard />
    </div>
    <div className="grid flex-[422] grid-cols-2 gap-[10px]">
      <RegionAmountCard />
      <TopRegionsCard />
    </div>
  </main>
);

const App = () => (
  <div className="flex h-screen flex-col overflow-hidden bg-[#eaebeb] font-['Noto_Sans_CJK_SC',sans-serif] text-[12px] text-[#222]">
    <Toolbar />
    <div className="flex min-h-0 flex-1">
      <ModelPanel />
      <StylePanel />
      <Dashboard />
    </div>
  </div>
);

export default App;
